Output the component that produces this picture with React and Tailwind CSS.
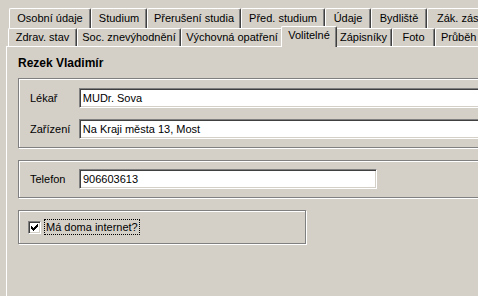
import React from "react";

function Tab({ label, cls }) {
  return (
    <div
      className={
        "flex items-center justify-center shrink-0 border-t border-l border-white border-r border-r-[#404040] rounded-t-[2px] shadow-[inset_-1px_0_0_#808080] whitespace-nowrap overflow-hidden " +
        cls
      }
    >
      {label}
    </div>
  );
}

function Field({ cls, value }) {
  return (
    <div
      className={
        "h-[20px] bg-white border-t border-l border-[#808080] border-b border-r border-b-white border-r-white shadow-[inset_1px_1px_0_#404040,inset_-1px_-1px_0_#d4d0c8] flex items-center pl-[3px] whitespace-nowrap " +
        cls
      }
    >
      {value}
    </div>
  );
}

export default function App() {
  return (
    <div className="w-[478px] h-[296px] bg-[#d4d0c8] overflow-hidden font-['Liberation_Sans',Arial,sans-serif] text-[11px] leading-[13px] text-black">
      {/* back row of tabs */}
      <div className="flex pt-[8px] pl-[9px] h-[28px]">
        <Tab label="Osobní údaje" cls="w-[82px] h-[20px]" />
        <Tab label="Studium" cls="w-[56px] h-[20px]" />
        <Tab label="Přerušení studia" cls="w-[94px] h-[20px]" />
        <Tab label="Před. studium" cls="w-[84px] h-[20px]" />
        <Tab label="Údaje" cls="w-[46px] h-[20px]" />
        <Tab label="Bydliště" cls="w-[56px] h-[20px]" />
        <Tab label="Zák. zás" cls="w-[84px] h-[20px] justify-start pl-[9px]" />
      </div>
      {/* front row of tabs */}
      <div className="flex items-start pl-[8px] h-[18px] relative z-10">
        <Tab label="Zdrav. stav" cls="w-[69px] h-[18px]" />
        <Tab label="Soc. znevýhodnění" cls="w-[104px] h-[18px]" />
        <Tab label="Výchovná opatření" cls="w-[102px] h-[18px]" />
        <div className="shrink-0 w-[56px] h-[21px] -mt-[2px] -mx-[2px] pb-[3px] bg-[#d4d0c8] flex items-center justify-center border-t border-l border-white border-r border-r-[#404040] rounded-t-[2px] shadow-[inset_-1px_0_0_#808080] relative z-20">
          Volitelné
        </div>
        <Tab label="Zápisníky" cls="w-[57px] h-[18px]" />
        <Tab label="Foto" cls="w-[43px] h-[18px]" />
        <Tab label="Průběh" cls="w-[60px] h-[18px] justify-start pl-[5px]" />
      </div>
      {/* panel */}
      <div className="ml-[6px] h-[260px] border-l border-t border-white">
        <div className="pl-[11px] pt-[9px] font-bold text-[12px] leading-[14px]">Rezek Vladimír</div>

        <div className="ml-[11px] mt-[8px] w-[480px] h-[70px] border border-[#808080] shadow-[inset_1px_1px_0_#fff,1px_1px_0_#fff] pl-[11px] pt-[9px] flex flex-col gap-[11px]">
          <div className="flex items-center">
            <div className="w-[49px]">Lékař</div>
            <Field cls="w-[420px]" value="MUDr. Sova" />
          </div>
          <div className="flex items-center">
            <div className="w-[49px]">Zařízení</div>
            <Field cls="w-[420px]" value="Na Kraji města 13, Most" />
          </div>
        </div>

        <div className="ml-[11px] mt-[12px] w-[480px] h-[38px] border border-[#808080] shadow-[inset_1px_1px_0_#fff,1px_1px_0_#fff] pl-[11px] pt-[8px]">
          <div className="flex items-center">
            <div className="w-[49px]">Telefon</div>
            <Field cls="w-[298px]" value="906603613" />
          </div>
        </div>

        <div className="ml-[11px] mt-[12px] w-[288px] h-[34px] border border-[#808080] shadow-[inset_1px_1px_0_#fff,1px_1px_0_#fff] pl-[9px] flex items-center">
          <div className="w-[13px] h-[13px] bg-white border-t border-l border-[#808080] border-b border-r border-b-white border-r-white shadow-[inset_1px_1px_0_#404040,inset_-1px_-1px_0_#d4d0c8] flex items-center justify-center">
            <svg width="7" height="7" viewBox="0 0 7 7" className="block" shapeRendering="crispEdges">
              <path d="M6 0 H7 V3 H6 V4 H5 V5 H4 V6 H3 V7 H2 V6 H1 V5 H0 V2 H1 V3 H2 V4 H3 V3 H4 V2 H5 V1 H6 Z" fill="#000" />
            </svg>
          </div>
          <div className="ml-[3px] border border-dotted border-black px-[1px] h-[16px] flex items-center whitespace-nowrap">
            Má doma internet?
          </div>
        </div>
      </div>
    </div>
  );
}
